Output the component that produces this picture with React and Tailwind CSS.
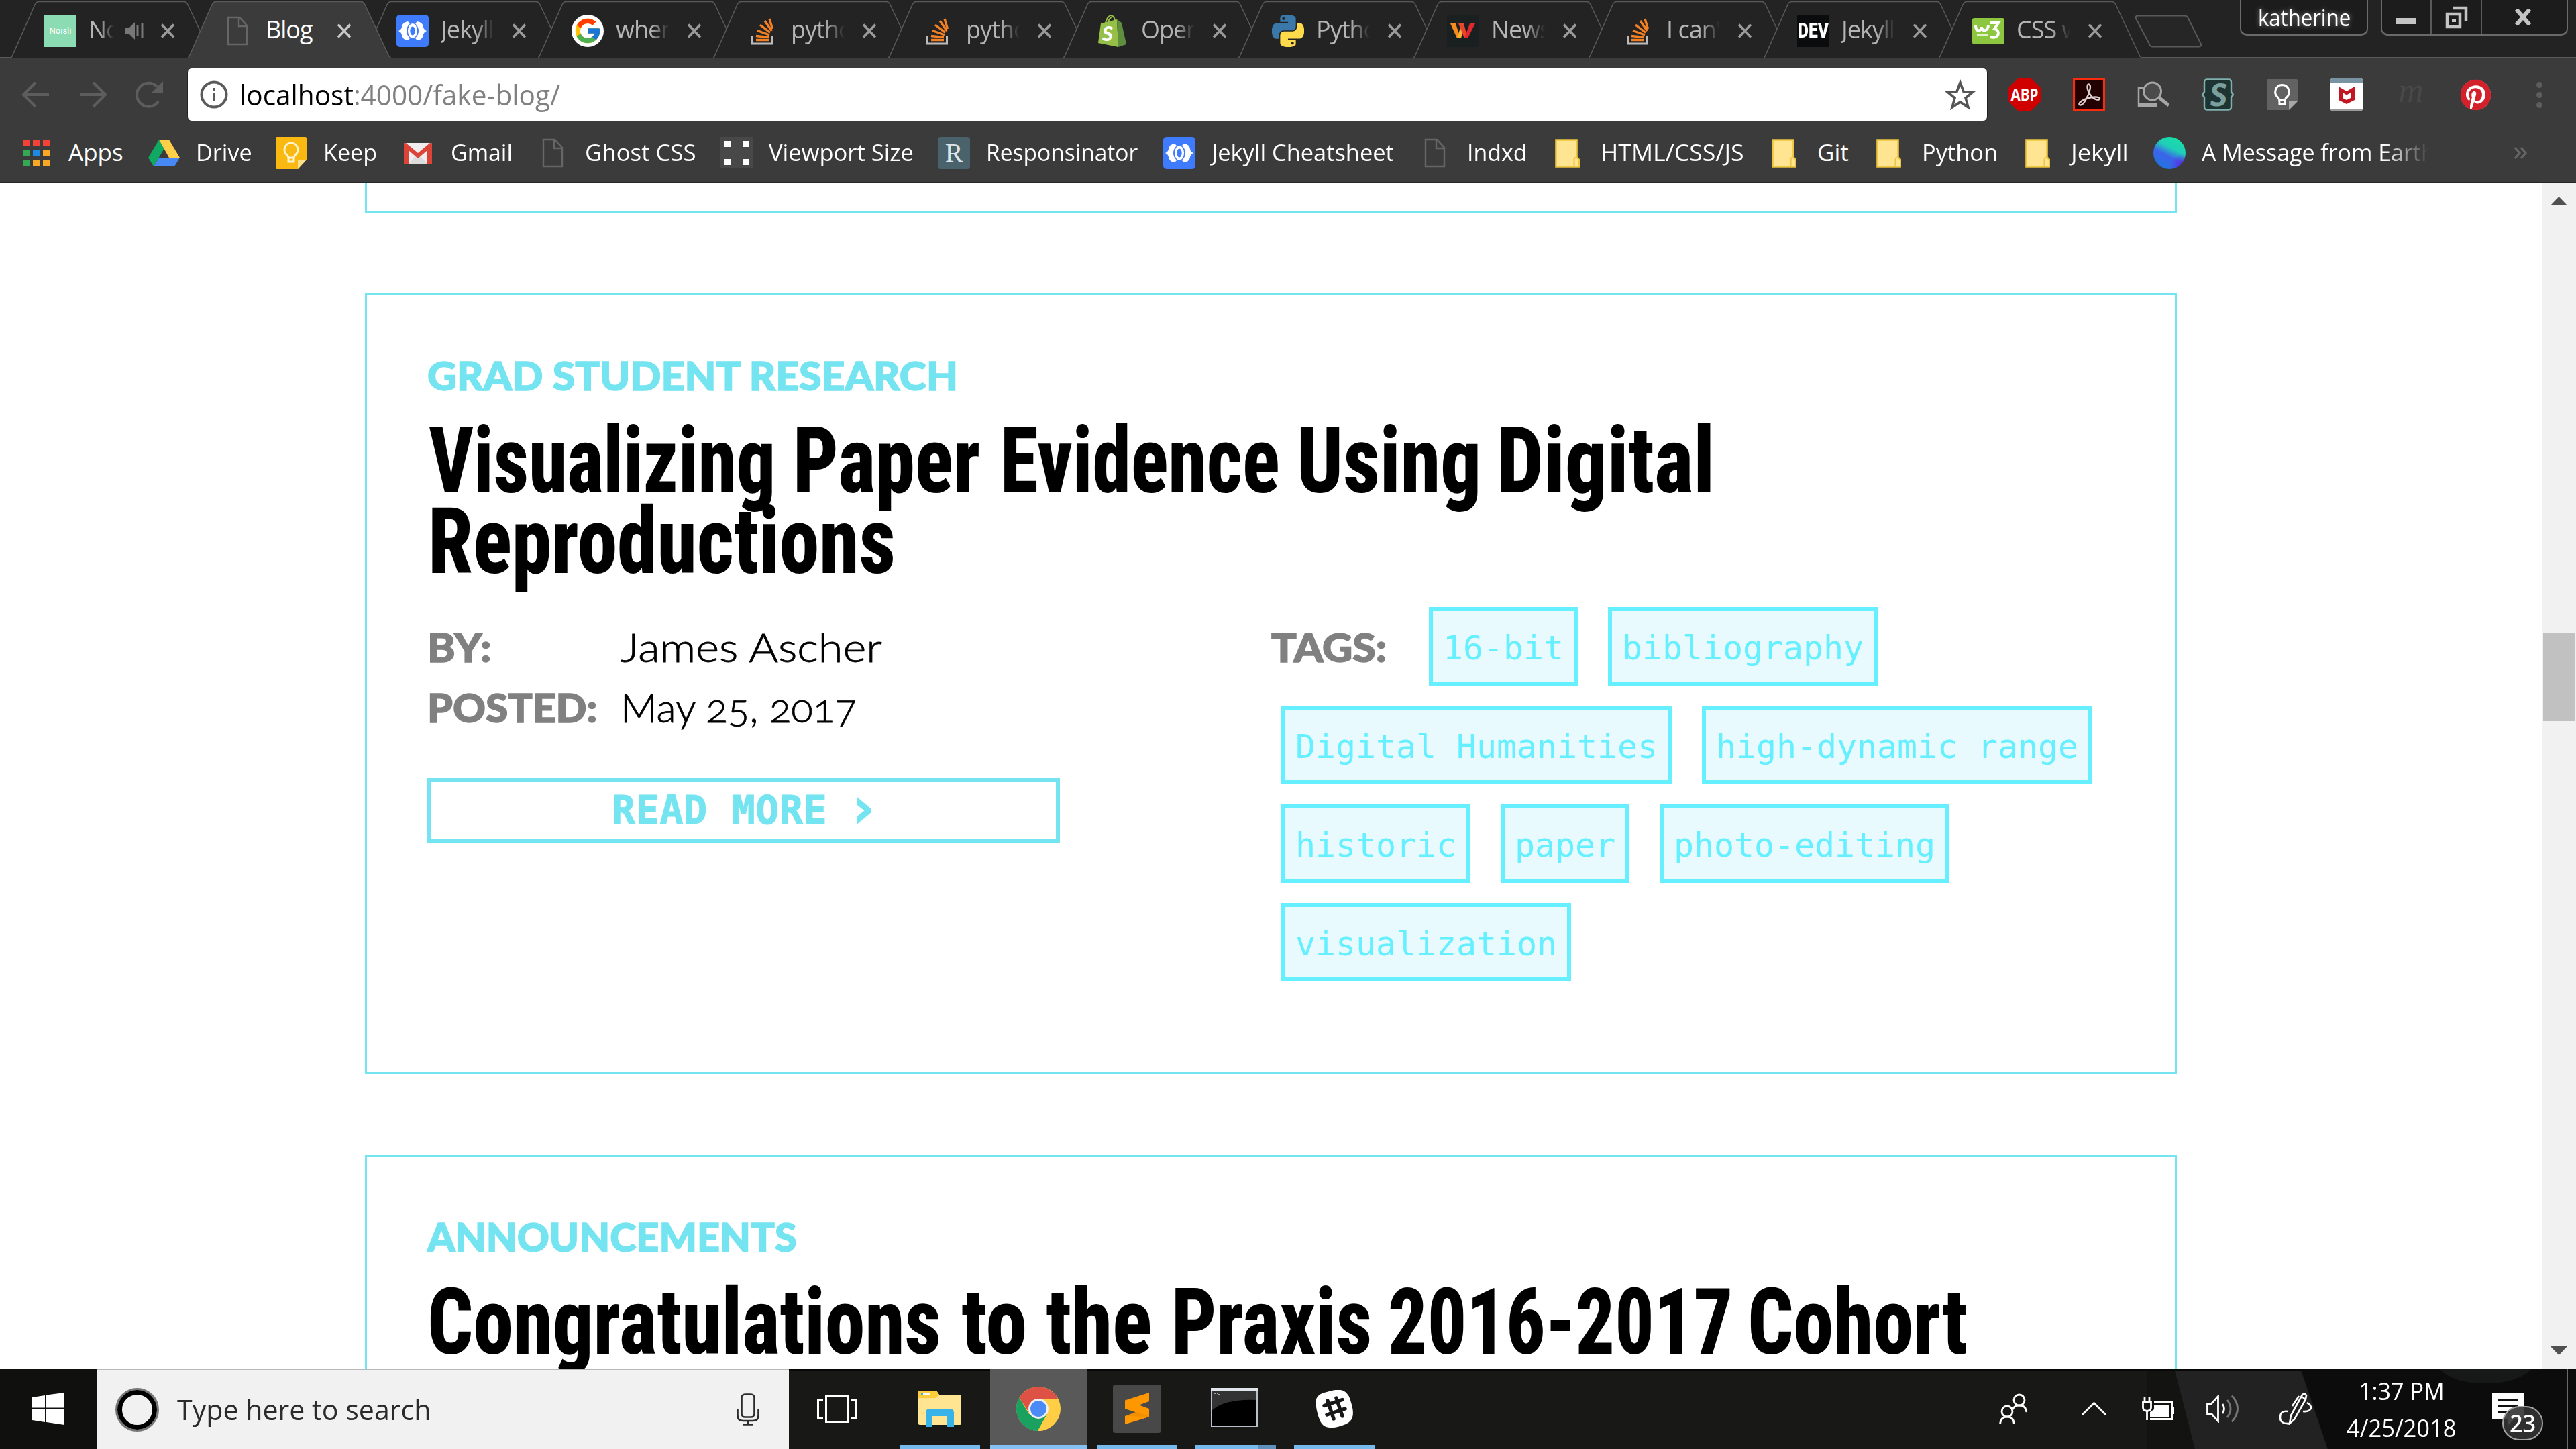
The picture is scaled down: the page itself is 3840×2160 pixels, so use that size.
import React, { useLayoutEffect, useRef, useState } from "react";
import { FcGoogle } from "react-icons/fc";
import { FaPinterest } from "react-icons/fa";

/* Text squeezed or stretched horizontally to an exact width. */
function Fit({ w, className = "", children }) {
  const ref = useRef(null);
  const [scale, setScale] = useState(1);
  useLayoutEffect(() => {
    const measure = () => {
      if (ref.current) setScale(w / ref.current.offsetWidth);
    };
    measure();
    document.fonts?.ready.then(measure);
  }, [w]);
  return (
    <span className={`block shrink-0 ${className}`} style={{ width: w }}>
      <span ref={ref} className="inline-block origin-left whitespace-nowrap" style={{ transform: `scaleX(${scale})` }}>
        {children}
      </span>
    </span>
  );
}

/* ---------- favicons ---------- */

const DocIcon = () => (
  <svg className="h-12 w-12" viewBox="0 0 48 48" fill="none" stroke="#666" strokeWidth="2.4">
    <path d="M10 4h17l11 12v28H10z" />
    <path d="M26 4v13h12" />
  </svg>
);

const JekyllIcon = () => (
  <svg className="h-12 w-12" viewBox="0 0 48 48">
    <rect width="48" height="48" rx="5" fill="#3f7bfd" />
    <path d="M17 10q-8 1-9 8-.500 4-5 6 4.500 2 5 6 1 7 9 8l3-3q-5-5-5-11t5-11zM31 10q8 1 9 8 .500 4 5 6-4.500 2-5 6-1 7-9 8l-3-3q5-5 5-11t-5-11z" fill="#fff" />
    <ellipse cx="24" cy="24" rx="7" ry="11" fill="#fff" />
    <ellipse cx="24" cy="24" rx="3.700" ry="6.500" fill="#3f7bfd" />
  </svg>
);

const StackIcon = () => (
  <svg className="h-12 w-12" viewBox="0 0 48 48">
    <path d="M8.500 31v12h29V31" fill="none" stroke="#bcbbbb" strokeWidth="3" />
    <g stroke="#f48024" strokeWidth="3.4">
      <path d="M14 37.500h19" />
      <path d="M14 31.500l19 2" />
      <path d="M16 23.500l18 6.500" />
      <path d="M20 15l15 11.500" />
      <path d="M27 9l10.500 15" />
      <path d="M34 6l4.500 15" />
    </g>
  </svg>
);

const PythonIcon = () => (
  <svg className="h-12 w-12" viewBox="0 0 24 24" fillRule="evenodd">
    <path
      fill="#3a78aa"
      d="M14.25.18l.9.2.73.26.59.3.45.32.34.34.25.34.16.33.1.3.04.26.02.2-.01.13V8.5l-.05.63-.13.55-.21.46-.26.38-.3.31-.33.25-.35.19-.35.14-.33.1-.3.07-.26.04-.21.02H8.77l-.69.05-.59.14-.5.22-.41.27-.33.32-.27.35-.2.36-.15.37-.1.35-.07.32-.04.27-.02.21v3.06H3.17l-.21-.03-.28-.07-.32-.12-.35-.18-.36-.26-.36-.36-.35-.46-.32-.59-.28-.73-.21-.88-.14-1.05-.05-1.23.06-1.22.16-1.04.24-.87.32-.71.36-.57.4-.44.42-.33.42-.24.4-.16.36-.1.32-.05.24-.01h.16l.06.01h8.16v-.83H6.18l-.01-2.75-.02-.37.05-.34.11-.31.17-.28.25-.26.31-.23.38-.2.44-.18.51-.15.58-.12.64-.1.71-.06.77-.04.84-.02 1.27.05zm-6.3 1.98l-.23.33-.08.41.08.41.23.34.33.22.41.09.41-.09.33-.22.23-.34.08-.41-.08-.41-.23-.33-.33-.22-.41-.09-.41.09z"
    />
    <path
      fill="#ffda4b"
      d="M21.04 6.11l.28.06.32.12.35.18.36.27.36.35.35.47.32.59.28.73.21.88.14 1.04.05 1.23-.06 1.23-.16 1.04-.24.86-.32.71-.36.57-.4.45-.42.33-.42.24-.4.16-.36.09-.32.05-.24.02-.16-.01h-8.22v.82h5.84l.01 2.76.02.36-.05.34-.11.31-.17.29-.25.25-.31.24-.38.2-.44.17-.51.15-.58.13-.64.09-.71.07-.77.04-.84.01-1.27-.04-1.07-.14-.9-.2-.73-.25-.59-.3-.45-.33-.34-.34-.25-.34-.16-.33-.1-.3-.04-.25-.02-.2.01-.13v-5.34l.05-.64.13-.54.21-.46.26-.38.3-.32.33-.24.35-.2.35-.14.33-.1.3-.06.26-.04.21-.02.13-.01h5.84l.69-.05.59-.14.5-.21.41-.28.33-.32.27-.35.2-.36.15-.36.1-.35.07-.32.04-.28.02-.21V6.07h2.09l.14.01zm-6.47 14.25l-.23.33-.08.41.08.41.23.33.33.23.41.08.41-.08.33-.23.23-.33.08-.41-.08-.41-.23-.33-.33-.23-.41-.08-.41.08z"
    />
  </svg>
);

const NoisliIcon = () => (
  <div className="flex h-12 w-12 items-center justify-center bg-[#8bdcb2] font-['Roboto'] text-[13px] text-white">Noisli</div>
);

const GoogleIcon = () => (
  <div className="flex h-12 w-12 items-center justify-center rounded-full bg-white">
    <FcGoogle className="h-[44px] w-[44px]" />
  </div>
);

const ShopifyBag = () => (
  <svg className="h-12 w-12" viewBox="0 0 48 48">
    <path d="M13 12C15 4 20-1 23 2c3 1 4 5 4 9M17 11c1-6 6-9 9-8" fill="none" stroke="#95bf47" strokeWidth="2" />
    <path d="M6 13l24-6 2 41L2 42z" fill="#95bf47" />
    <path d="M30 7l7 5 7 32-12 4z" fill="#5e8e3e" />
    <text x="8" y="39" fontSize="31" fontWeight="900" fontStyle="italic" fontFamily="Lato" fill="#fff">S</text>
  </svg>
);

const WIcon = () => (
  <svg className="h-12 w-12" viewBox="0 0 48 48">
    <rect width="48" height="48" fill="#1a1f20" />
    <path d="M5 13h8l7 22h-5z" fill="#f58a1f" />
    <path d="M15 35l5-16 4 4-3 12z" fill="#fbb12f" />
    <path d="M17 13h8l6 22h-5z" fill="#e8452c" />
    <path d="M26 35l8-22h8L31 35z" fill="#e0272f" />
  </svg>
);

const DevIcon = () => (
  <div className="flex h-12 w-12 items-center justify-center bg-[#0b0c0d]">
    <Fit w={46} className="font-['Roboto'] text-[31px] leading-[44px] font-black text-white">DEV</Fit>
  </div>
);

const W3Icon = () => (
  <svg className="h-12 w-12" viewBox="0 0 48 48">
    <rect y="5" width="48" height="39" rx="3" fill="#8dc63f" />
    <path d="M5 16c0 10 9 9 9 2 0 8 10 7 10-3" fill="none" stroke="#fff" strokeWidth="4" />
    <path d="M27 12h12l-6 9c10 2 7 16-6 12" fill="none" stroke="#fff" strokeWidth="4" />
    <path d="M7 30h16" stroke="#fff" strokeWidth="1.500" />
  </svg>
);

const AppsIcon = () => (
  <svg className="h-12 w-12" viewBox="0 0 48 48">
    {[
      ["#f44336", "#f44336", "#f44336"],
      ["#34a853", "#1e88e5", "#f9a825"],
      ["#34a853", "#f9a825", "#f9a825"],
    ].map((row, y) => row.map((c, x) => <rect key={`${x}${y}`} x={4 + x * 15} y={4 + y * 15} width="10" height="10" fill={c} />))}
  </svg>
);

const DriveIcon = () => (
  <svg className="h-12 w-12" viewBox="0 0 48 48">
    <path d="M17 4L1 31l8 13 16-27z" fill="#11a861" />
    <path d="M17 4h15l16 27H32z" fill="#ffcf48" />
    <path d="M9 44l8-13h31l-8 13z" fill="#4688f4" />
  </svg>
);

const KeepIcon = () => (
  <svg className="h-12 w-12" viewBox="0 0 48 48">
    <path d="M3 0h42q2 0 2 2v32L34 48H3q-2 0-2-2V2q0-2 2-2z" fill="#f9b911" />
    <path d="M34 48V34h13z" fill="#fde28b" />
    <path d="M24 9a10 10 0 0 0-6 18c1 1 2 2 2 5v5h8v-5c0-3 1-4 2-5A10 10 0 0 0 24 9zM20 31h8" fill="none" stroke="#fff3d0" strokeWidth="3" />
  </svg>
);

const GmailIcon = () => (
  <svg className="h-12 w-12" viewBox="0 0 48 48">
    <rect x="2" y="9" width="42" height="32" rx="2" fill="#eee" />
    <path d="M8 41l15-16 15 16z" fill="#dcdcdc" />
    <path d="M2 12q0-3 3-3l18 15L41 9q3 0 3 3v29h-7V20L23 32 9 20v21H2z" fill="#db4437" />
  </svg>
);

const ViewportIcon = () => (
  <svg className="h-12 w-12" viewBox="0 0 48 48">
    <rect width="48" height="46" fill="#484848" />
    <path d="M6 6h9v9H6zM33 6h9v9h-9zM6 33h9v9H6zM33 33h9v9h-9z" fill="#fff" />
  </svg>
);

const RIcon = () => (
  <div className="flex h-12 w-12 items-center justify-center rounded-[4px] bg-[#4a626b] font-['Liberation_Serif'] text-[40px] text-[#dfe5e6]">R</div>
);

const FolderIcon = () => (
  <svg className="h-12 w-12" viewBox="0 0 48 48">
    <path d="M5.500 4.500h31v26l3 3v11h-34z" fill="#ffe591" stroke="#eec63f" strokeWidth="2.600" />
    <path d="M32.500 44V34q0-4 4-3l3.500 3v10z" fill="#ffe591" stroke="#eec63f" strokeWidth="2" />
  </svg>
);

const EarthIcon = () => (
  <div className="h-12 w-12 rounded-full bg-[radial-gradient(circle_at_88%_88%,#5a2be0_0%,transparent_28%),linear-gradient(207deg,#19dca8_15%,#1fcdb8_38%,#3d63ea_58%,#2472e0_85%)]" />
);

/* ---------- tab strip ---------- */

const tabs = [
  { title: "Noisli", icon: <NoisliIcon />, audio: true },
  { title: "Blog", icon: <DocIcon />, active: true },
  { title: "Jekyll", icon: <JekyllIcon /> },
  { title: "where", icon: <GoogleIcon /> },
  { title: "python", icon: <StackIcon /> },
  { title: "python", icon: <StackIcon /> },
  { title: "Open", icon: <ShopifyBag /> },
  { title: "Python", icon: <PythonIcon /> },
  { title: "News", icon: <WIcon /> },
  { title: "I can't", icon: <StackIcon /> },
  { title: "Jekyll", icon: <DevIcon /> },
  { title: "CSS w", icon: <W3Icon /> },
];

function Tab({ title, icon, active, audio }) {
  return (
    <div className={`relative flex h-[87px] shrink-0 items-center pt-1 ${active ? "z-10" : ""} ${audio ? "w-[264px]" : "w-[261px]"} pl-[50px]`}>
      <svg className="absolute top-0 left-0 h-[87px] w-[304px]" viewBox="0 0 304 87">
        <path
          d="M0 86.500L2 84 36 7Q38 2.500 42 2.500H258Q262 2.500 264 7L300 84 303 86.500"
          fill={active ? "#3b3b3b" : "#232323"}
          stroke="#5a5a5a"
          strokeWidth="1.500"
        />
        {active && <path d="M2 86.500H301" stroke="#3b3b3b" strokeWidth="3" />}
      </svg>
      <div className="relative h-12 w-12">{icon}</div>
      <div
        className={`relative -mt-1 ml-[18px] h-[50px] overflow-hidden text-[36px] leading-[50px] tracking-[-1px] whitespace-nowrap ${
          audio ? "w-[38px] [mask-image:linear-gradient(to_right,#000_45%,transparent)]" : "w-[80px]"
        } ${active ? "text-white" : "text-[#b5b5b5]"} ${!active && !audio ? "[mask-image:linear-gradient(to_right,#000_65%,transparent)]" : ""}`}
      >
        {title}
      </div>
      {audio && (
        <svg className="relative ml-4 h-7 w-[30px]" viewBox="0 0 30 28" fill="#777">
          <path d="M1 9h6l8-8v26l-8-8H1z" />
          <path d="M19 6v16M26 3v22" stroke="#777" strokeWidth="3" />
        </svg>
      )}
      <svg className={`relative h-[22px] w-[22px] ${audio ? "ml-[23px]" : "ml-[26px]"}`} viewBox="0 0 22 22" stroke={active ? "#c8c8c8" : "#9a9a9a"} strokeWidth="3.600">
        <path d="M2 1.500l18 19M20 1.500l-18 19" />
      </svg>
    </div>
  );
}

function TabStrip() {
  return (
    <div className="relative flex h-[87px] border-b-2 border-[#5a5a5a] bg-[#232323] pl-[16px]">
      {tabs.map((t, i) => (
        <Tab key={i} {...t} />
      ))}
      <svg className="mt-[22px] ml-[32px] h-[50px] w-[100px] shrink-0" viewBox="0 0 100 50" fill="#262626" stroke="#5a5a5a" strokeWidth="2">
        <path d="M3 1.500H73q5 0 6 4l19 38q1 4-3 4H26q-4 0-5-4L1 6q-1-4.500 2-4.500z" />
      </svg>
      <div className="ml-[56px] flex h-[53px] w-[191px] shrink-0 items-center justify-center rounded-b-[10px] border-x-2 border-b-[3px] border-[#6a6a6a] bg-[#1c1c1c] text-white [text-shadow:0_0_8px_#fff8]">
        <Fit w={138} className="mt-[1px] text-[34px] leading-[46px]">katherine</Fit>
      </div>
      <div className="ml-[19px] flex h-[53px] w-[279px] shrink-0 rounded-b-[10px] border-x-2 border-b-[3px] border-[#6a6a6a] bg-[#1c1c1c]">
        <div className="flex w-[74px] justify-center border-r-2 border-[#5a5a5a] pt-[27px]">
          <div className="h-[9px] w-[30px] bg-[#c4c4c4]" />
        </div>
        <div className="flex w-[75px] justify-center border-r-2 border-[#5a5a5a] pt-[9px]">
          <svg className="h-[34px] w-[34px]" viewBox="0 0 34 34" fill="none" stroke="#c4c4c4" strokeWidth="4.500">
            <path d="M3 12h19v19H3z" />
            <path d="M11 3h20v20" />
            <path d="M10 21.500h6" strokeWidth="5" />
          </svg>
        </div>
        <div className="flex flex-1 items-center justify-center pr-[4px]">
          <svg className="h-[25px] w-[28px]" viewBox="0 0 28 25" stroke="#c4c4c4" strokeWidth="6">
            <path d="M4 1l20 23M24 1L4 24" />
          </svg>
        </div>
      </div>
    </div>
  );
}

/* ---------- toolbar ---------- */

const extensions = [
  <svg className="h-12 w-12" viewBox="0 0 48 48">
    <path d="M14 0h20l14 14v20L34 48H14L0 34V14z" fill="#d00000" />
    <text x="24" y="33" textAnchor="middle" textLength="41" lengthAdjust="spacingAndGlyphs" fontSize="25" fontWeight="700" fontFamily="Open Sans" fill="#fff">ABP</text>
  </svg>,
  <svg className="h-12 w-12" viewBox="0 0 48 48">
    <rect x="1.500" y="1.500" width="45" height="45" fill="#230000" stroke="#fa2a0c" strokeWidth="3" />
    <path
      d="M23.500 8.500q3.500 1 2 7.500-2 9-7 17-4 7-8 6.500-3-2 2.500-6 6-4 15-5.500 9-1.500 12 1 .500 3-4 2.500-6-1-10.500-8-4-6-4-11 .200-4 2-4z"
      fill="none"
      stroke="#dccfcf"
      strokeWidth="2.400"
    />
  </svg>,
  <svg className="h-12 w-12" viewBox="0 0 48 48" fill="none" stroke="#a5a5a5">
    <path d="M8 14H2v27h25" strokeWidth="2.500" />
    <path d="M2 39h25v-3" strokeWidth="6" />
    <circle cx="22.500" cy="19" r="13" strokeWidth="3" fill="#4b4b4b" />
    <path d="M32 28l15 12" strokeWidth="5" />
  </svg>,
  <svg className="h-12 w-12" viewBox="0 0 48 48">
    <path d="M8 1.500h32q4 0 4 4V20l3 4-3 4v14.500q0 4-4 4H8q-4 0-4-4V28l-3-4 3-4V5.500q0-4 4-4z" fill="#1e3432" stroke="#7fb0ad" strokeWidth="2.400" />
    <text x="24.500" y="41" textAnchor="middle" fontSize="47" fontWeight="700" fontFamily="Open Sans" transform="skewX(-5) translate(3 0)" fill="#7a9f9d">S</text>
  </svg>,
  <svg className="h-12 w-12" viewBox="0 0 48 48">
    <path d="M3 1h42q2 0 2 2v31L34 47H3q-2 0-2-2V3q0-2 2-2z" fill="#626262" />
    <path d="M34 47V34h13z" fill="#a8a8a8" />
    <path d="M24 9.500a10.500 10.500 0 0 0-6.500 18.500c2 2 2.500 3 2.500 9.500h8c0-6.500.500-7.500 2.500-9.500A10.500 10.500 0 0 0 24 9.500zM20 32.500h8" fill="none" stroke="#fff" strokeWidth="3" />
  </svg>,
  <svg className="h-12 w-12" viewBox="0 0 48 48">
    <rect width="48" height="48" rx="3" fill="#fff" />
    <path d="M3 0h42q3 0 3 3v4H0V3q0-3 3-3z" fill="#7a93a3" />
    <path d="M0 45h48q0 3-3 3H3q-3 0-3-3z" fill="#9a9a9a" />
    <path d="M12 12l12 7 12-7v20l-12 6-12-6z" fill="#c01722" />
    <path d="M18 21l6 3.500 6-3.500v8l-6 3-6-3z" fill="#fff" />
  </svg>,
  <div className="-mt-1.5 flex h-12 w-12 items-center justify-center font-['Liberation_Serif'] text-[52px] leading-none text-[#484848] italic">m</div>,
  <div className="flex h-12 w-12 items-center justify-center">
    <div className="flex h-[45px] w-[45px] items-center justify-center rounded-full bg-white">
      <FaPinterest className="h-[47px] w-[47px] shrink-0 text-[#d3202b]" />
    </div>
  </div>,
];

function Toolbar() {
  return (
    <div className="flex h-[108px] items-center bg-[#3b3b3b] pl-[30px]">
      <svg className="h-[48px] w-[48px]" viewBox="0 0 48 48" fill="none" stroke="#5d5d5d" strokeWidth="4">
        <path d="M43 24H6M23 6L5 24l18 18" />
      </svg>
      <svg className="ml-[36px] h-[48px] w-[48px]" viewBox="0 0 48 48" fill="none" stroke="#5d5d5d" strokeWidth="4">
        <path d="M5 24h37M25 6l18 18-18 18" />
      </svg>
      <svg className="ml-[36px] h-[48px] w-[48px]" viewBox="0 0 48 48" fill="none" stroke="#5d5d5d" strokeWidth="4">
        <path d="M38 34A17.500 17.500 0 1 1 36 12" />
        <path d="M45 4v18H27z" fill="#5d5d5d" stroke="none" />
      </svg>
      <div className="ml-[33px] flex h-20 w-[2684px] shrink-0 items-center rounded-[7px] border border-[#222] bg-white pr-[17px] pl-[18px]">
        <svg className="h-[42px] w-[42px]" viewBox="0 0 42 42" fill="none" stroke="#5a5a5a" strokeWidth="4">
          <circle cx="21" cy="21" r="18.500" />
          <path d="M21 18v13M21 11v4.500" />
        </svg>
        <Fit w={478} className="-mt-px ml-[17px] text-[42px] leading-[60px] text-[#808080]">
          <span className="text-black">localhost</span>:4000/fake-blog/
        </Fit>
        <svg className="ml-auto h-[46px] w-[46px]" viewBox="0 0 46 46" fill="none" stroke="#555" strokeWidth="3.600">
          <path d="M23 5l5 13.500 14 .5-11 9 4 14-12-8-12 8 4-14-11-9 14-.5z" />
        </svg>
      </div>
      <div className="ml-[31px] flex gap-12">
        {extensions.map((e, i) => (
          <div key={i} className="h-12 w-12 shrink-0">
            {e}
          </div>
        ))}
      </div>
      <div className="ml-[67px] flex flex-col gap-[6px]">
        <div className="h-[9px] w-[9px] rounded-full bg-[#5d5d5d]" />
        <div className="h-[9px] w-[9px] rounded-full bg-[#5d5d5d]" />
        <div className="h-[9px] w-[9px] rounded-full bg-[#5d5d5d]" />
      </div>
    </div>
  );
}

/* slot: distance to the next bookmark; w: width of the label */
const bookmarks = [
  { t: "Apps", icon: <AppsIcon />, slot: 190, w: 82 },
  { t: "Drive", icon: <DriveIcon />, slot: 190, w: 84 },
  { t: "Keep", icon: <KeepIcon />, slot: 190, w: 80 },
  { t: "Gmail", icon: <GmailIcon />, slot: 200, w: 92 },
  { t: "Ghost CSS", icon: <DocIcon />, slot: 274, w: 166 },
  { t: "Viewport Size", icon: <ViewportIcon />, slot: 324, w: 216 },
  { t: "Responsinator", icon: <RIcon />, slot: 336, w: 226 },
  { t: "Jekyll Cheatsheet", icon: <JekyllIcon />, slot: 381, w: 272 },
  { t: "Indxd", icon: <DocIcon />, slot: 199, w: 89 },
  { t: "HTML/CSS/JS", icon: <FolderIcon />, slot: 323, w: 214 },
  { t: "Git", icon: <FolderIcon />, slot: 156, w: 47 },
  { t: "Python", icon: <FolderIcon />, slot: 222, w: 113 },
  { t: "Jekyll", icon: <FolderIcon />, slot: 195, w: 86 },
];

function Bookmarks() {
  return (
    <div className="flex h-[78px] items-center border-b-2 border-[#262626] bg-[#3b3b3b] pb-[10px] pl-[30px] text-[35px] leading-[50px] text-white">
      {bookmarks.map((b, i) => (
        <div key={i} className="flex shrink-0 items-center" style={{ width: b.slot }}>
          <div className="mr-[24px] h-12 w-12">{b.icon}</div>
          <Fit w={b.w} className="-mt-0.5">{b.t}</Fit>
        </div>
      ))}
      <EarthIcon />
      <div className="-mt-0.5 ml-[24px] h-[50px] w-[339px] overflow-hidden [mask-image:linear-gradient(to_right,#000_80%,transparent)]">
        <Fit w={348}>A Message from Earth</Fit>
      </div>
      <svg className="ml-auto mr-[71px] h-[20px] w-[22px]" viewBox="0 0 22 20" fill="none" stroke="#666" strokeWidth="3">
        <path d="M2 2l7 8-7 8M11 2l7 8-7 8" />
      </svg>
    </div>
  );
}

/* ---------- page ---------- */

/* Each title line is a list of [word, width, space before]. */
function PostHead({ category, categoryWidth, lines }) {
  return (
    <>
      <Fit
        w={categoryWidth}
        className="h-[72px] font-['Lato'] text-[59px] leading-[76px] font-black text-[#75e4f1] uppercase [-webkit-text-stroke:1.5px_#75e4f1]"
      >
        {category}
      </Fit>
      <h2 className="mt-[33px] font-['Roboto'] text-[138px] leading-[120px] font-extrabold text-black [font-stretch:75%]">
        {lines.map((words, i) => (
          <span key={i} className="flex h-[120px]">
            {words.map(([word, w, space]) => (
              <span key={word} style={{ marginLeft: space }}>
                <Fit w={w} className="h-[120px]">{word}</Fit>
              </span>
            ))}
          </span>
        ))}
      </h2>
    </>
  );
}

const tagRows = [["16-bit", "bibliography"], ["Digital Humanities", "high-dynamic range"], ["historic", "paper", "photo-editing"], ["visualization"]];

const Tag = ({ children }) => (
  <div className="h-[117px] border-6 border-[#66f0ff] bg-[#e8fafe] px-[15px] pt-[3px] font-['DejaVu_Sans_Mono'] text-[50px] leading-[105px] tracking-[-0.1px] whitespace-nowrap text-[#66f0ff]">
    {children}
  </div>
);

const Label = ({ w, children, className = "" }) => (
  <Fit w={w} className={`font-['Lato'] text-[59px] leading-[90px] font-black text-[#808080] [-webkit-text-stroke:1.5px_#808080] ${className}`}>
    {children}
  </Fit>
);

function Page() {
  return (
    <div className="flex h-[1767px] bg-white">
      <main className="flex h-full w-[3789px] flex-col gap-[120px] overflow-hidden pr-[544px] pl-[544px]">
        <article className="h-[44px] shrink-0 border-x-3 border-b-3 border-[#75e4f1]" />
        <article className="h-[1164px] shrink-0 border-3 border-[#75e4f1] pt-[82px] pl-[90px]">
          <PostHead
            category="Grad Student Research"
            categoryWidth={791}
            lines={[
              [
                ["Visualizing", 517, 2],
                ["Paper", 279, 26],
                ["Evidence", 417, 30],
                ["Using", 275, 25],
                ["Digital", 325, 23],
              ],
              [["Reproductions", 697, 1]],
            ]}
          />
          <div className="mt-[38px] flex">
            <div className="w-[1258px] pt-[15px]">
              <div className="grid grid-cols-[288px_1fr] font-['Lato'] text-[59px] leading-[90px] font-light text-black">
                <Label w={95}>BY:</Label>
                <Fit w={390} className="[-webkit-text-stroke:0.8px_#000]">James Ascher</Fit>
                <Label w={253}>POSTED:</Label>
                <Fit w={352} className="[-webkit-text-stroke:0.8px_#000] [font-variant-numeric:oldstyle-nums]">May 25, 2017</Fit>
              </div>
              <div className="mt-[60px] flex h-24 w-[943px] items-center justify-center border-6 border-[#75e4f1] font-['DejaVu_Sans_Mono'] text-[58px] leading-[80px] font-bold whitespace-pre tracking-[0.8px] text-[#75e4f1] [-webkit-text-stroke:1px_#75e4f1]">
                READ MORE <span className="inline-block origin-[50%_62%] scale-[1.45]">›</span>
              </div>
            </div>
            <div className="flex flex-col gap-[30px]">
              {tagRows.map((row, i) => (
                <div key={i} className={`flex items-center gap-[45px] ${i === 0 ? "" : "pl-[15px]"}`}>
                  {i === 0 && (
                    <div className="mr-[18px] pt-[3px]">
                      <Label w={172}>TAGS:</Label>
                    </div>
                  )}
                  {row.map((t) => (
                    <Tag key={t}>{t}</Tag>
                  ))}
                </div>
              ))}
            </div>
          </div>
        </article>
        <article className="h-[900px] shrink-0 border-3 border-[#75e4f1] pt-[82px] pl-[90px]">
          <PostHead
            category="Announcements"
            categoryWidth={551}
            lines={[
              [
                ["Congratulations", 766, 0],
                ["to", 98, 30],
                ["the", 158, 28],
                ["Praxis", 299, 29],
                ["2016-2017", 514, 24],
                ["Cohort", 328, 22],
              ],
            ]}
          />
        </article>
      </main>
      <div className="flex h-full w-[51px] flex-col items-center bg-[#f1f1f1] pt-[20px] pb-[20px]">
        <svg className="h-[13px] w-[25px]" viewBox="0 0 25 13" fill="#505050">
          <path d="M0 13L12.500 0 25 13z" />
        </svg>
        <div className="mt-[637px] h-[132px] w-[47px] bg-[#c1c1c1]" />
        <svg className="mt-auto h-[13px] w-[25px]" viewBox="0 0 25 13" fill="#505050">
          <path d="M0 0L12.500 13 25 0z" />
        </svg>
      </div>
    </div>
  );
}

/* ---------- taskbar ---------- */

function TaskButton({ children, active, extra, className = "" }) {
  return (
    <div className={`flex h-full shrink-0 flex-col ${active ? "w-36 bg-[#595959]" : "w-[120px]"} ${className}`}>
      <div className="flex flex-1 items-center justify-center pt-[6px]">{children}</div>
      <div className={`flex h-[6px] justify-end ${active ? "bg-[#85c2f3]" : "bg-[#76b9ed]"}`}>{extra && <div className="w-[27px] bg-[#5e92bd]" />}</div>
    </div>
  );
}

function Taskbar() {
  return (
    <footer className="relative flex h-[120px] bg-[linear-gradient(#080808_3px,#181816_3px)]">
      <svg className="absolute top-0 right-0 h-[120px] w-[640px]" viewBox="0 0 640 120">
        <path d="M0 3h640v117H0z" fill="#131312" />
        <path d="M42 3h188l40 117H72z" fill="#222" />
        <path d="M230 0h410v120H270z" fill="#0c0c0c" />
        <path d="M436 0q20 22 69 22t69-22z" fill="#171818" />
      </svg>
      <div className="flex w-36 items-center justify-center bg-[#10100e]">
        <svg className="h-12 w-12" viewBox="0 0 48 48" fill="#fff">
          <path d="M0 7l19-3v18.500H0zM21 3.500L48 0v22.500H21zM0 24.500h19V44L0 41zM21 24.500h27V48l-27-4z" />
        </svg>
      </div>
      <div className="flex w-[1032px] items-center border-t-2 border-[#b8b8b8] bg-[#f1f1f1] pr-[44px] pl-[28px]">
        <svg className="h-[65px] w-[65px]" viewBox="0 0 65 65" fill="none">
          <circle cx="32.500" cy="32.500" r="31" stroke="#777" strokeWidth="3" />
          <circle cx="32.500" cy="32.500" r="26" stroke="#000" strokeWidth="7" />
        </svg>
        <Fit w={379} className="ml-[27px] text-[42px] leading-[60px] text-[#2b2b2b]">Type here to search</Fit>
        <svg className="ml-auto h-12 w-[34px]" viewBox="0 0 34 48" fill="none" stroke="#2b2b2b" strokeWidth="2.600">
          <rect x="7.500" y="1.500" width="19" height="34" rx="5" />
          <path d="M1.500 24v9q0 8 8 8h15q8 0 8-8v-9M17 41v6M9 46.500h16" />
        </svg>
      </div>
      <div className="flex w-[165px] items-center pl-[42px]">
        <svg className="h-[42px] w-[60px]" viewBox="0 0 60 42" fill="none" stroke="#fff" strokeWidth="3">
          <path d="M13.500 1.500h33v39h-33zM9 7.500H1.500v27H9M51 7.500h7.500v27H51" />
        </svg>
      </div>
      <TaskButton>
        <svg className="h-[54px] w-[64px]" viewBox="0 0 64 54">
          <path d="M0 2q0-2 2-2h25l4 6h31q2 0 2 2v41q0 2-2 2H2q-2 0-2-2z" fill="#ffe591" />
          <path d="M0 2q0-2 2-2h23q2 0 3 2l3 4-5 5H0z" fill="#fdce3a" />
          <path d="M7 4h11v3H7z" fill="#fff" />
          <path d="M4 4h3v3H4z" fill="#37b3ea" />
          <path d="M11 54V33q0-6 6-6h30q6 0 6 6v21H43V38H21v16z" fill="#37b3ea" />
        </svg>
      </TaskButton>
      <TaskButton active className="ml-[15px]">
        <svg className="h-[66px] w-[66px]" viewBox="0 0 66 66">
          <circle cx="33" cy="33" r="33" fill="#ffce44" />
          <path d="M4.400 16.500A33 33 0 0 1 62 18H33L20 40z" fill="#de5145" />
          <path d="M4.400 16.500A33 33 0 0 0 32 66L46 41l-27 0z" fill="#1aa15f" />
          <path d="M33 18h28.600A33 33 0 0 1 32 66l14-25z" fill="#ffce44" />
          <circle cx="33" cy="33" r="15" fill="#f1f1f1" />
          <circle cx="33" cy="33" r="12" fill="#4c8bf5" />
        </svg>
      </TaskButton>
      <TaskButton className="ml-[15px]">
        <svg className="h-[72px] w-[72px]" viewBox="0 0 72 72">
          <rect width="72" height="72" rx="4" fill="#484848" />
          <path d="M18 47l16-6 20 7-36 11z" fill="#f28f00" />
          <path d="M18 23.500L54 12v13l-15 5.500L54 36v12L18 36z" fill="#ff9800" />
          <path d="M18 47v12l36-11z" fill="#ff9800" />
        </svg>
      </TaskButton>
      <TaskButton extra className="ml-[27px]">
        <svg className="-mt-1 -ml-1 h-[58px] w-[70px]" viewBox="0 0 70 58">
          <rect x="1" y="1" width="68" height="56" fill="#000" stroke="#b9c2cc" strokeWidth="2" />
          <path d="M2 2h66v16Q22 16 2 33z" fill="#333" />
          <path d="M0 0h70v4H0z" fill="#dfe5ea" />
          <path d="M5 8h3M9 8h1M10 10h3" stroke="#ccc" strokeWidth="1.500" />
        </svg>
      </TaskButton>
      <TaskButton className="ml-[27px]">
        <svg className="h-[56px] w-[56px]" viewBox="0 0 56 56">
          <path d="M17 3Q35-3 43 2q7 3 11 20 5 18-3 25-3 4-18 8-15 3-21-2Q6 49 2 31-2 12 5 8q3-3 12-5z" fill="#fff" />
          <path d="M18 16l9 27M31 12l9 27M13 23.500l27-9M17 37l27-9" stroke="#171717" strokeWidth="5.500" strokeLinecap="round" />
        </svg>
      </TaskButton>

      <div className="relative ml-auto flex h-full items-center">
        <svg className="h-[46px] w-[42px]" viewBox="0 0 42 46" fill="none" stroke="#fff" strokeWidth="2.800">
          <circle cx="30" cy="10" r="8" />
          <path d="M20 24q3-6 10-6 10 0 11 10" />
          <circle cx="12" cy="27" r="8" />
          <path d="M1.500 46q1-11 10.500-11t10.500 11" />
        </svg>
        <svg className="ml-[81px] h-[20px] w-[37px]" viewBox="0 0 37 20" fill="none" stroke="#fff" strokeWidth="2.800">
          <path d="M1 19L18.500 1.500 36 19" />
        </svg>
        <svg className="ml-[53px] h-[34px] w-[48px]" viewBox="0 0 48 34" fill="none" stroke="#fff" strokeWidth="2.800">
          <path d="M18 7.500h27v25H12" />
          <path d="M18 12h23v17H12V22l6-4z" fill="#fff" stroke="none" />
          <path d="M46.500 14v11" strokeWidth="3" />
          <path d="M4 0v7M11 0v7M1.500 7.500h12v8q0 4-6 5-6-1-6-5zM7.500 20v14" />
        </svg>
        <svg className="ml-[48px] h-[42px] w-[49px]" viewBox="0 0 49 42" fill="none" strokeWidth="2.800">
          <path d="M1.500 13.500h6l10-11v37l-10-11h-6z" stroke="#fff" />
          <path d="M24 14q5 7 0 14" stroke="#fff" />
          <path d="M31 8q10 13 0 26M38 1.500q17 19 0 39" stroke="#777" />
        </svg>
        <svg className="ml-[59px] h-[48px] w-[49px]" viewBox="0 0 49 48" fill="none" stroke="#fff" strokeWidth="2.600">
          <path d="M16 46l2-12L35 3q3-3 6 1l-1 6-17 30zM34 6l6 4" />
          <path d="M30 5L20 20M14 28Q2 26 2 37q0 10 13 9M42 15q6 3 6 8-2 6-12 5" />
        </svg>
        <div className="mt-[2px] ml-[49px] flex w-[170px] flex-col items-center text-[36px] leading-[55px] text-white">
          <Fit w={128}>1:37 PM</Fit>
          <Fit w={164}>4/25/2018</Fit>
        </div>
        <div className="relative ml-[50px] h-[48px] w-[111px]">
          <svg className="h-12 w-12" viewBox="0 0 48 48">
            <path d="M0 0h48v39H33l-9 9v-9H0z" fill="#fff" />
            <path d="M9 10.500h30M9 19.500h30M9 28.500h18" stroke="#111" strokeWidth="3" />
          </svg>
          <div className="absolute top-[20px] left-[15px] flex h-[51px] w-[61px] items-center justify-center rounded-full border-2 border-[#a5a5a5] bg-[#333]/90 text-[36px] leading-none font-semibold text-white">
            <Fit w={39}>23</Fit>
          </div>
        </div>
        <div className="h-full w-[2px] bg-[#6a6a6a]" />
        <div className="w-[12px]" />
      </div>
    </footer>
  );
}

export default function App() {
  return (
    <div className="flex h-[2160px] w-[3840px] flex-col overflow-hidden bg-white font-['Open_Sans','Noto_Sans',sans-serif]">
      <TabStrip />
      <Toolbar />
      <Bookmarks />
      <Page />
      <Taskbar />
    </div>
  );
}
